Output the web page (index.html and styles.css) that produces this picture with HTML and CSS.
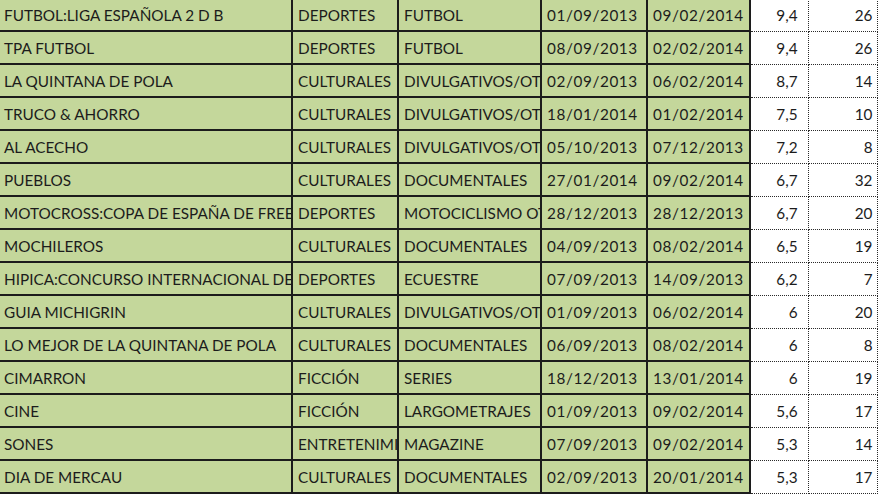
FILE: index.html
```html
<!DOCTYPE html>
<html lang="es">
<head>
<meta charset="utf-8">
<title>Programas</title>
<link rel="stylesheet" href="styles.css">
</head>
<body>
<table class="sheet">
  <colgroup>
    <col class="c-name"><col class="c-cat"><col class="c-sub"><col class="c-date"><col class="c-date2"><col class="c-val"><col class="c-num">
  </colgroup>
  <tbody>
    <tr><td class="g">FUTBOL:LIGA ESPAÑOLA 2 D B</td><td class="g">DEPORTES</td><td class="g">FUTBOL</td><td class="g d">01/09/2013</td><td class="g d">09/02/2014</td><td class="v">9,4</td><td class="n">26</td></tr>
    <tr><td class="g">TPA FUTBOL</td><td class="g">DEPORTES</td><td class="g">FUTBOL</td><td class="g d">08/09/2013</td><td class="g d">02/02/2014</td><td class="v">9,4</td><td class="n">26</td></tr>
    <tr><td class="g">LA QUINTANA DE POLA</td><td class="g">CULTURALES</td><td class="g">DIVULGATIVOS/OT</td><td class="g d">02/09/2013</td><td class="g d">06/02/2014</td><td class="v">8,7</td><td class="n">14</td></tr>
    <tr><td class="g">TRUCO &amp; AHORRO</td><td class="g">CULTURALES</td><td class="g">DIVULGATIVOS/OT</td><td class="g d">18/01/2014</td><td class="g d">01/02/2014</td><td class="v">7,5</td><td class="n">10</td></tr>
    <tr><td class="g">AL ACECHO</td><td class="g">CULTURALES</td><td class="g">DIVULGATIVOS/OT</td><td class="g d">05/10/2013</td><td class="g d">07/12/2013</td><td class="v">7,2</td><td class="n">8</td></tr>
    <tr><td class="g">PUEBLOS</td><td class="g">CULTURALES</td><td class="g">DOCUMENTALES</td><td class="g d">27/01/2014</td><td class="g d">09/02/2014</td><td class="v">6,7</td><td class="n">32</td></tr>
    <tr><td class="g">MOTOCROSS:COPA DE ESPAÑA DE FREE</td><td class="g">DEPORTES</td><td class="g">MOTOCICLISMO OT</td><td class="g d">28/12/2013</td><td class="g d">28/12/2013</td><td class="v">6,7</td><td class="n">20</td></tr>
    <tr><td class="g">MOCHILEROS</td><td class="g">CULTURALES</td><td class="g">DOCUMENTALES</td><td class="g d">04/09/2013</td><td class="g d">08/02/2014</td><td class="v">6,5</td><td class="n">19</td></tr>
    <tr><td class="g">HIPICA:CONCURSO INTERNACIONAL DE</td><td class="g">DEPORTES</td><td class="g">ECUESTRE</td><td class="g d">07/09/2013</td><td class="g d">14/09/2013</td><td class="v">6,2</td><td class="n">7</td></tr>
    <tr><td class="g">GUIA MICHIGRIN</td><td class="g">CULTURALES</td><td class="g">DIVULGATIVOS/OT</td><td class="g d">01/09/2013</td><td class="g d">06/02/2014</td><td class="v">6</td><td class="n">20</td></tr>
    <tr><td class="g">LO MEJOR DE LA QUINTANA DE POLA</td><td class="g">CULTURALES</td><td class="g">DOCUMENTALES</td><td class="g d">06/09/2013</td><td class="g d">08/02/2014</td><td class="v">6</td><td class="n">8</td></tr>
    <tr><td class="g">CIMARRON</td><td class="g">FICCIÓN</td><td class="g">SERIES</td><td class="g d">18/12/2013</td><td class="g d">13/01/2014</td><td class="v">6</td><td class="n">19</td></tr>
    <tr><td class="g">CINE</td><td class="g">FICCIÓN</td><td class="g">LARGOMETRAJES</td><td class="g d">01/09/2013</td><td class="g d">09/02/2014</td><td class="v">5,6</td><td class="n">17</td></tr>
    <tr><td class="g">SONES</td><td class="g">ENTRETENIMI</td><td class="g">MAGAZINE</td><td class="g d">07/09/2013</td><td class="g d">09/02/2014</td><td class="v">5,3</td><td class="n">14</td></tr>
    <tr><td class="g">DIA DE MERCAU</td><td class="g">CULTURALES</td><td class="g">DOCUMENTALES</td><td class="g d">02/09/2013</td><td class="g d">20/01/2014</td><td class="v">5,3</td><td class="n">17</td></tr>
  </tbody>
</table>
</body>
</html>
```

FILE: styles.css
```css
html, body {
  margin: 0;
  padding: 0;
  background: #ffffff;
  overflow: hidden;
}

.sheet {
  border-collapse: collapse;
  table-layout: fixed;
  width: 878px;
  margin-top: -3px;
  margin-left: -1px;
  font-family: Lato, "Liberation Sans", sans-serif;
  font-size: 15.3px;
  color: #1c1c1c;
}

.c-name { width: 293px; }
.c-cat { width: 106px; }
.c-sub { width: 143px; }
.c-date { width: 106px; }
.c-date2 { width: 103px; }
.c-val { width: 58px; }
.c-num { width: 69px; }

.sheet td {
  height: 33px;
  padding: 0 0 0 5px;
  white-space: nowrap;
  overflow: hidden;
  text-overflow: clip;
  vertical-align: middle;
  box-sizing: border-box;
}

.sheet td.g {
  background: #c4d79b;
  border: 2px solid #1c1c1c;
}

.sheet td.d {
  letter-spacing: 0.6px;
}

.sheet tr td.g:first-child {
  border-left: none;
}

.sheet td.v,
.sheet td.n {
  background: #ffffff;
  border: 1px dotted #2a2a2a;
  text-align: right;
}

.sheet td.v {
  padding-right: 10px;
}

.sheet td.n {
  padding-right: 4px;
}
```
